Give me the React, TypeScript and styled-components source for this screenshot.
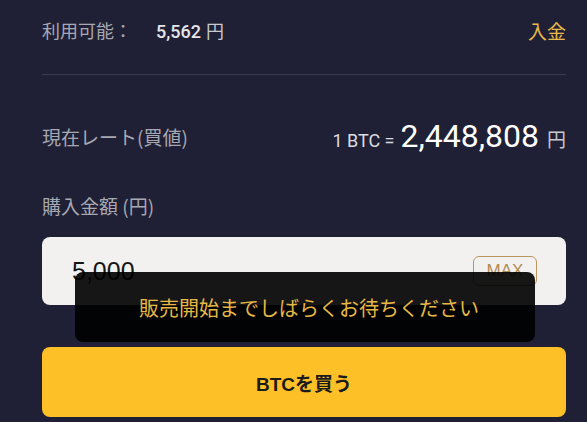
import React from "react";
import styled, { createGlobalStyle } from "styled-components";

const GlobalStyle = createGlobalStyle`
    body {
        margin: 0;
        background: #1f2035;
        font-family: "Noto Sans CJK JP", "Noto Sans", sans-serif;
    }
`;

const Page = styled.div`
    padding: 0 21px 0 42px;
    height: 422px;
    overflow: hidden;
    box-sizing: border-box;
`;

const BalanceRow = styled.div`
    display: flex;
    justify-content: space-between;
    align-items: center;
    height: 75px;
    padding-bottom: 14px;
    box-sizing: border-box;
    border-bottom: 1px solid #383a4e;
`;

const Label = styled.span<{ $size?: number }>`
    color: #a8a8b2;
    font-size: ${(props) => props.$size ?? 19}px;
`;

const Balance = styled.span`
    margin-left: 24px;
    color: #e6e6ea;
    font-size: 18px;
    font-family: Roboto, "Noto Sans CJK JP", sans-serif;
    font-weight: 500;
`;

const Yen = styled.span<{ $size: number }>`
    margin-left: ${(props) => (props.$size > 18 ? 8 : 5)}px;
    font-family: "Noto Sans CJK JP", sans-serif;
    font-weight: 400;
    font-size: ${(props) => props.$size}px;
    color: #c9c9cf;
`;

const DepositLink = styled.a`
    color: #e9b949;
    font-size: 19px;
    cursor: pointer;
`;

const RateRow = styled.div`
    display: flex;
    justify-content: space-between;
    align-items: center;
    height: 50px;
    margin-top: 36px;
`;

const RateValue = styled.div`
    display: flex;
    align-items: baseline;
    font-family: Roboto, sans-serif;
`;

const RateUnit = styled.span`
    color: #dcdce0;
    font-size: 18px;
    margin-right: 6px;
`;

const RatePrice = styled.span`
    color: #ffffff;
    font-size: 32px;
`;

const FormArea = styled.div`
    position: relative;
    margin-top: 32px;
`;

const AmountLabel = styled(Label)`
    display: block;
    line-height: 26px;
`;

const InputBox = styled.div`
    display: flex;
    align-items: center;
    justify-content: space-between;
    height: 68px;
    margin-top: 18px;
    padding: 0 29px 0 30px;
    background: #f3f1ef;
    border-radius: 8px;
    box-sizing: border-box;
`;

const AmountInput = styled.input`
    border: none;
    outline: none;
    background: transparent;
    width: 200px;
    padding: 0;
    font-family: "Liberation Sans", Arial, sans-serif;
    font-size: 25px;
    color: #151515;
`;

const MaxButton = styled.button`
    width: 64px;
    height: 30px;
    border: 1px solid #b89660;
    border-radius: 6px;
    background: transparent;
    color: #b08c55;
    font-family: "Liberation Sans", Arial, sans-serif;
    font-size: 17px;
    font-weight: 500;
    padding: 0;
`;

const BuyButton = styled.button`
    display: block;
    width: 100%;
    height: 70px;
    margin-top: 42px;
    border: none;
    border-radius: 8px;
    background: #fec027;
    color: #1b1b1b;
    font-family: "Liberation Sans", "Noto Sans CJK JP", sans-serif;
    font-size: 19px;
    font-weight: 700;
    cursor: pointer;
`;

const Toast = styled.div`
    position: absolute;
    left: 33px;
    top: 79px;
    width: 460px;
    height: 70px;
    padding-left: 8px;
    box-sizing: border-box;
    display: flex;
    align-items: center;
    justify-content: center;
    background: rgba(0, 0, 0, 0.91);
    border-radius: 8px;
    color: #e6b846;
    font-size: 20px;
`;

export default function App() {
    return (
        <Page>
            <GlobalStyle />
            <BalanceRow>
                <div>
                    <Label $size={18}>利用可能：</Label>
                    <Balance>
                        5,562
                        <Yen $size={18}>円</Yen>
                    </Balance>
                </div>
                <DepositLink>入金</DepositLink>
            </BalanceRow>
            <RateRow>
                <Label>現在レート(買値)</Label>
                <RateValue>
                    <RateUnit>1 BTC =</RateUnit>
                    <RatePrice>2,448,808</RatePrice>
                    <Yen $size={19}>円</Yen>
                </RateValue>
            </RateRow>
            <FormArea>
                <AmountLabel>購入金額 (円)</AmountLabel>
                <InputBox>
                    <AmountInput defaultValue="5,000" />
                    <MaxButton>MAX</MaxButton>
                </InputBox>
                <BuyButton>BTCを買う</BuyButton>
                <Toast>販売開始までしばらくお待ちください</Toast>
            </FormArea>
        </Page>
    );
}
